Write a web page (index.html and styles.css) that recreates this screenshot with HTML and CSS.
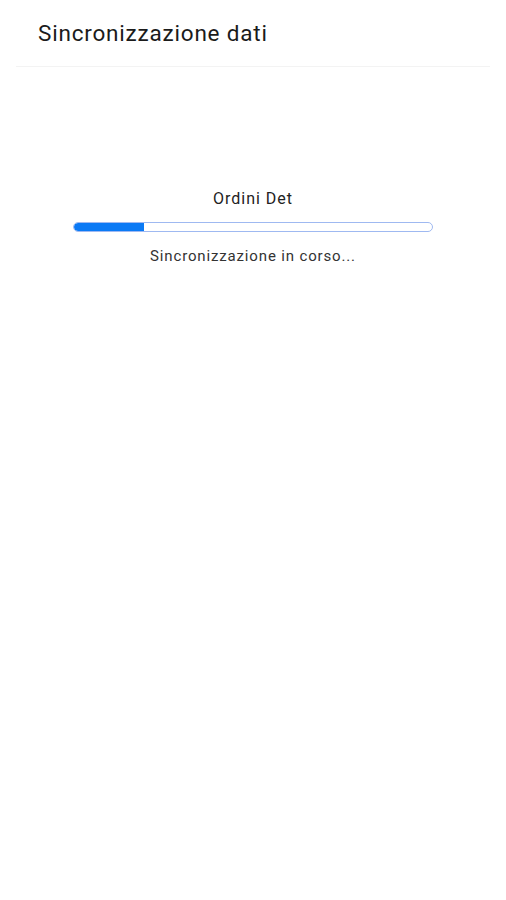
FILE: index.html
```html
<!DOCTYPE html>
<html lang="it">
<head>
<meta charset="utf-8">
<title>Sincronizzazione dati</title>
<link rel="stylesheet" href="styles.css">
</head>
<body>
<header class="header">
  <h1 class="title">Sincronizzazione dati</h1>
</header>
<main class="content">
  <div class="sync">
    <div class="sync-label">Ordini Det</div>
    <div class="progress"><div class="progress-fill" style="width: 19.5%"></div></div>
    <div class="sync-status">Sincronizzazione in corso...</div>
  </div>
</main>
</body>
</html>
```
FILE: styles.css
```css
* { box-sizing: border-box; }
html, body {
  margin: 0;
  padding: 0;
  background: #ffffff;
  font-family: Roboto, "Noto Sans", sans-serif;
  color: #1a1a1a;
}
.header {
  margin: 0 16px;
  padding: 20px 22px 0;
  height: 67px;
  border-bottom: 1px solid #f3f3f3;
}
.title {
  margin: 0;
  font-size: 22.5px;
  font-weight: 400;
  line-height: 26px;
  letter-spacing: 0.8px;
  color: #1b1b1b;
}
.content {
  display: flex;
  justify-content: center;
  padding-top: 122px;
}
.sync {
  width: 360px;
  display: flex;
  flex-direction: column;
  align-items: center;
}
.sync-label {
  font-size: 16px;
  line-height: 20px;
  letter-spacing: 1px;
  color: #222;
}
.progress {
  margin-top: 13px;
  width: 100%;
  height: 10px;
  border: 1.5px solid #9fb9f1;
  border-radius: 5px;
  overflow: hidden;
  background: #fff;
}
.progress-fill {
  height: 100%;
  background: #0b7af5;
  border-radius: 5px 0 0 5px;
}
.sync-status {
  margin-top: 14px;
  font-size: 15px;
  line-height: 20px;
  letter-spacing: 0.85px;
  color: #333;
}
```
